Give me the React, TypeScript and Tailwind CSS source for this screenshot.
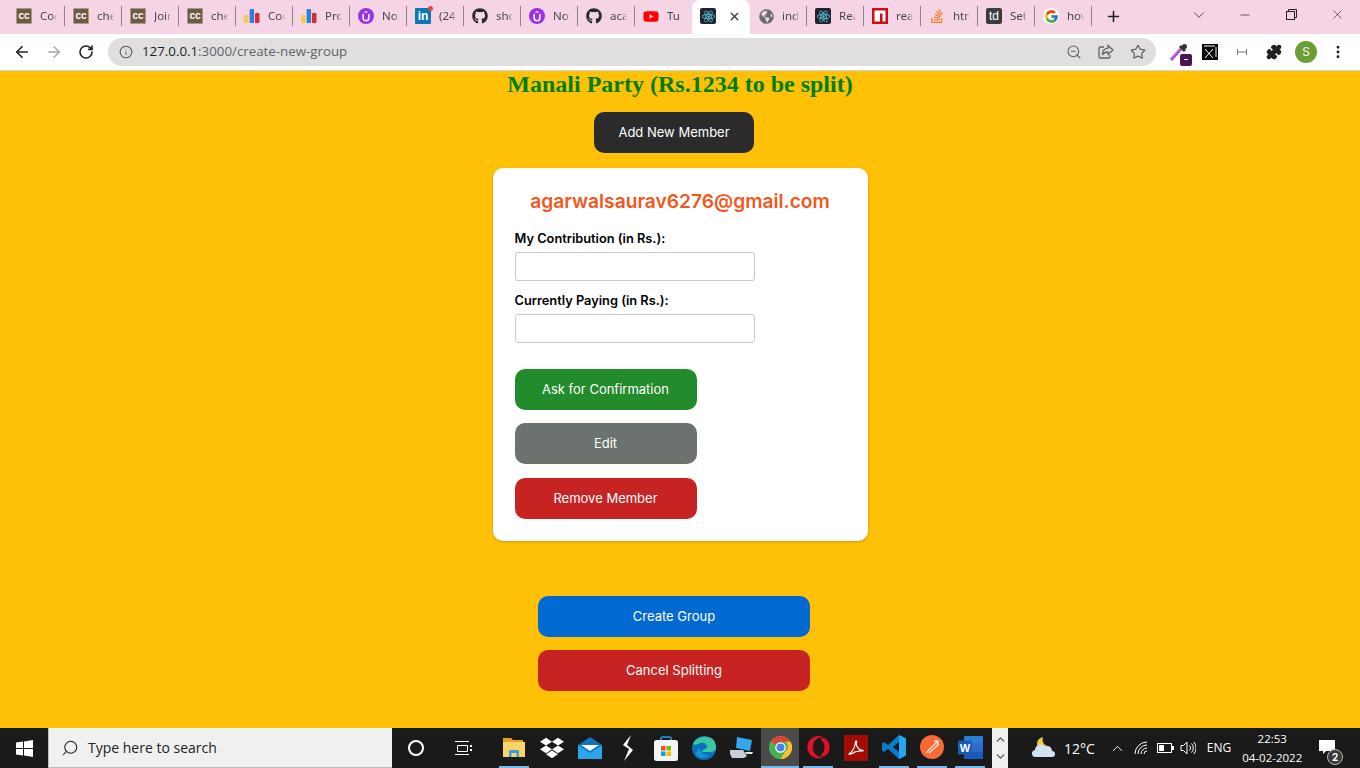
import React from "react";
import { ArrowLeft, ArrowRight, RotateCw, Info, X, Plus, ChevronDown, Minus, ZoomOut, Star, Puzzle, MoreVertical, Search, ChevronUp } from "lucide-react";
import { FaGithub, FaYoutube, FaDropbox, FaGlobeAmericas, FaStackOverflow, FaOpera } from "react-icons/fa";
import { FcGoogle } from "react-icons/fc";
import { SiReact } from "react-icons/si";

const CC = () => (
  <span className="flex h-4 w-4 items-center justify-center rounded-[1px] border border-[#a89a87] bg-[#6f5a43] font-['Liberation_Sans',sans-serif] text-[10px] font-bold leading-none text-white">cc</span>
);
const Bars = () => (
  <svg width="16" height="16" viewBox="0 0 16 16"><rect x="0" y="7" width="4.5" height="8" rx="1" fill="#f7c948" /><rect x="5.6" y="1" width="4.5" height="14" rx="1" fill="#2f7de1" /><rect x="11" y="5" width="4.5" height="10" rx="1" fill="#d32f2f" /></svg>
);
const Purple = () => (
  <svg width="16" height="16" viewBox="0 0 16 16"><circle cx="8" cy="8" r="8" fill="#9b30e8" /><path d="M5.2 6v4a2.8 2.8 0 0 0 5.6 0V6" fill="none" stroke="#fff" strokeWidth="1.6" /><path d="M8 3 5.5 4.6h5z" fill="#fff" /></svg>
);
const LinkedIn = () => (
  <span className="relative flex h-4 w-4 items-center justify-center rounded-[1px] bg-[#0a78b5] font-['Liberation_Sans',sans-serif] text-[12px] font-bold leading-none text-white">in<span className="absolute -right-[2px] -top-[2px] h-[5px] w-[5px] rounded-full bg-[#e04a3f]" /></span>
);
const Github = () => <FaGithub size={16} color="#24292e" />;
const Youtube = () => <FaYoutube size={17} color="#f00" />;
const ReactIcon = () => (
  <span className="flex h-4 w-4 items-center justify-center rounded-[2px] bg-[#20232a]"><SiReact size={13} color="#61dafb" /></span>
);
const Globe = () => <FaGlobeAmericas size={15} color="#6a6d70" />;
const Npm = () => (
  <svg width="16" height="16" viewBox="0 0 16 16"><rect width="16" height="16" fill="#cb0f17" /><path d="M2.5 2.5h11v11h-3V5.5H8v8H2.5z" fill="#fff" /></svg>
);
const SO = () => <FaStackOverflow size={16} color="#f48024" />;
const TD = () => (
  <span className="flex h-4 w-4 items-center justify-center rounded-[2px] bg-[#3b3b3b] font-['Liberation_Sans',sans-serif] text-[12px] leading-none text-white">td</span>
);
const Google = () => (
  <span className="flex h-4 w-4 items-center justify-center rounded-full bg-white"><FcGoogle size={15} /></span>
);

const tabs: [React.ReactNode, string][] = [
  [<CC />, "Cod"], [<CC />, "che"], [<CC />, "Join"], [<CC />, "che"], [<Bars />, "Cod"], [<Bars />, "Pro"],
  [<Purple />, "Not"], [<LinkedIn />, "(24"], [<Github />, "sho"], [<Purple />, "Not"], [<Github />, "aca"], [<Youtube />, "Tu"],
];
const tabsAfter: [React.ReactNode, string][] = [
  [<Globe />, "ind"], [<ReactIcon />, "Rea"], [<Npm />, "rea"], [<SO />, "htn"], [<TD />, "Set"], [<Google />, "hov"],
];

const Tab = ({ icon, title, last }: { icon: React.ReactNode; title: string; last: boolean }) => (
  <div className="flex h-[34px] w-[57px] items-center pb-[2px] pl-2">
    <span className="flex w-4 shrink-0 items-center justify-center">{icon}</span>
    <span className="ml-2 w-[18px] overflow-hidden whitespace-nowrap font-['Noto_Sans',sans-serif] text-[11.500px] text-[#45484c] [mask-image:linear-gradient(to_right,black_72%,transparent)]">{title}</span>
    <span className={"ml-[7px] h-5 w-px " + (last ? "bg-transparent" : "bg-[#8d8589]")} />
  </div>
);

const PageButton = ({ className, label }: { className: string; label: string }) => (
  <button className={"flex h-[41px] items-center justify-center rounded-[10px] text-[13px] font-normal text-white " + className}>{label}</button>
);

const Win = () => (
  <svg width="17" height="17" viewBox="0 0 17 17" fill="#fff"><path d="M0 2.6 7 1.6v6.4H0zM8 1.4 17 0v8H8zM0 9h7v6.4l-7-1zM8 9h9v8l-9-1.4z" /></svg>
);

const Files = () => (
  <svg width="22" height="20" viewBox="0 0 22 20"><path d="M0 1h8l2 2h10v4H0z" fill="#e0a526" /><rect y="5" width="22" height="15" fill="#f9d66b" /><path d="M6 20v-6a1 1 0 0 1 1-1h8a1 1 0 0 1 1 1v6h-2.5v-4h-5v4z" fill="#3f9cd8" /></svg>
);
const Mail = () => (
  <svg width="24" height="22" viewBox="0 0 24 22"><path d="M0 8 12 0l12 8v14H0z" fill="#0f74bd" /><path d="M0 8l12 8 12-8v14H0z" fill="#28a8ea" /><path d="M3 8h18l-9 6z" fill="#fff" /></svg>
);
const Bolt = () => (
  <svg width="14" height="26" viewBox="0 0 14 26"><path d="M10 0 2 10l6 4-5 12 9-11-6-5z" fill="#fff" /></svg>
);
const Store = () => (
  <svg width="24" height="25" viewBox="0 0 24 25"><path d="M7 5V2.5A1.5 1.5 0 0 1 8.5 1h7A1.5 1.5 0 0 1 17 2.5V5" fill="none" stroke="#19a0e0" strokeWidth="1.6" /><rect y="4" width="24" height="21" rx="2.5" fill="#f4f4f4" /><rect x="7" y="10" width="4.5" height="4.5" fill="#f25022" /><rect x="12.5" y="10" width="4.5" height="4.5" fill="#7fba00" /><rect x="7" y="15.5" width="4.5" height="4.5" fill="#00a4ef" /><rect x="12.5" y="15.5" width="4.5" height="4.5" fill="#ffb900" /></svg>
);
const Edge = () => (
  <svg width="24" height="24" viewBox="0 0 24 24"><circle cx="12" cy="12" r="12" fill="#0c70b8" /><path d="M1 8C4 1 13-1 19 2c4 2 5 6 5 10 0 3-3 4-6 4H10c0-3 4-2 5-5 0-3-3-5-6-4-4 1-7 3-8 1z" fill="#38c8a0" /><path d="M8 12c0 5 5 8 10 6-3 4-9 5-13 2-2-2-1-6 3-8z" fill="#1690d8" /></svg>
);
const Laptop = () => (
  <svg width="24" height="22" viewBox="0 0 24 22"><path d="M7 0l15 3-2 11-14-3z" fill="#35a5ec" /><path d="M0 13h13l4 6-3 2H2l-2-4z" fill="#c9cfd4" /><path d="M15 15h8l-1 2h-6z" fill="#e8e8e8" /></svg>
);
const Chrome = () => (
  <svg width="23" height="23" viewBox="0 0 24 24"><circle cx="12" cy="12" r="12" fill="#4caf50" /><path d="M12 0a12 12 0 0 1 10.4 6H12a6 6 0 0 0-5.5 3.5L2.2 5A12 12 0 0 1 12 0z" fill="#db4437" /><path d="M22.4 6A12 12 0 0 1 12 24l5-8a6 6 0 0 0 0-10z" fill="#fbc02d" /><circle cx="12" cy="12" r="5.5" fill="#fff" /><circle cx="12" cy="12" r="4.2" fill="#4a86e8" /></svg>
);
const Acrobat = () => (
  <span className="flex h-[26px] w-[24px] items-center justify-center bg-[#a30b05]">
    <svg width="16" height="16" viewBox="0 0 16 16" fill="none" stroke="#fff" strokeWidth="1.2"><path d="M1 14C4 12 7 7 7.5 2c.2-2 1.5-1 1 1C8 6 10 10 15 10.5c1.500.5-3 0-7 1.200C5 12.500 3 15 1 14z" /></svg>
  </span>
);
const VSCode = () => (
  <svg width="24" height="24" viewBox="0 0 24 24"><path d="M17 0l7 3.500v17L17 24 6 14l-4 3-2-1.500v-7L2 7l4 3z" fill="#0a7cc8" /><path d="M17 0l7 3.500v17L17 24z" fill="#22a7f0" /><path d="M17 7l-6 5 6 5z" fill="#1a1a1a" /></svg>
);
const Postman = () => (
  <svg width="24" height="24" viewBox="0 0 24 24"><circle cx="12" cy="12" r="12" fill="#f76935" /><path d="M6 18 17 7M9 18l10-9M14 6l4 0 0 4" stroke="#ffe0d0" strokeWidth="1.400" fill="none" /></svg>
);
const Word = () => (
  <svg width="25" height="23" viewBox="0 0 25 23"><rect x="6" y="0" width="19" height="23" rx="1" fill="#2b7cd3" /><rect x="6" y="15.500" width="19" height="7.500" fill="#185abd" /><rect x="6" y="7.500" width="19" height="8" fill="#2b6dc8" /><rect x="0" y="4.500" width="14" height="14" rx="1" fill="#1a5db5" /><text x="7" y="15.500" textAnchor="middle" fontFamily="Liberation Sans" fontWeight="700" fontSize="11" fill="#fff">W</text></svg>
);

const apps: { icon: React.ReactNode; open?: boolean; active?: boolean }[] = [
  { icon: <Files />, open: true },
  { icon: <FaDropbox size={24} color="#fff" /> },
  { icon: <Mail /> },
  { icon: <Bolt /> },
  { icon: <Store /> },
  { icon: <Edge /> },
  { icon: <Laptop /> },
  { icon: <Chrome />, open: true, active: true },
  { icon: <FaOpera size={23} color="#e3102a" />, open: true },
  { icon: <Acrobat /> },
  { icon: <VSCode />, open: true },
  { icon: <Postman />, open: true },
  { icon: <Word />, open: true },
];

const Weather = () => (
  <svg width="24" height="22" viewBox="0 0 24 22"><path d="M11 0a7 7 0 0 0 7 9.500A7.500 7.500 0 0 1 5 8a7 7 0 0 1 6-8z" fill="#f8c93e" /><path d="M4 20a3.500 3.500 0 0 1-1-7A5.500 5.500 0 0 1 13 10a4.500 4.500 0 0 1 7 4 3 3 0 0 1 0 6z" fill="#cfe3f5" /></svg>
);
const Wifi = () => (
  <svg width="14" height="14" viewBox="0 0 14 14" fill="none" stroke="#fff" strokeWidth="1"><path d="M1 13A12 12 0 0 1 13 1M4 13a9 9 0 0 1 9-9M7 13a6 6 0 0 1 6-6M10 13a3 3 0 0 1 3-3" /></svg>
);
const Battery = () => (
  <svg width="17" height="10" viewBox="0 0 17 10" fill="none"><rect x=".5" y=".5" width="14" height="9" stroke="#fff" /><rect x="2" y="2" width="5" height="6" fill="#fff" /><rect x="15" y="3" width="2" height="4" fill="#fff" /></svg>
);
const Volume = () => (
  <svg width="16" height="14" viewBox="0 0 16 14" fill="none" stroke="#fff" strokeWidth="1"><path d="M1 4.500h2.500L7 1v12L3.500 9.500H1zM9.500 4.500a3.500 3.500 0 0 1 0 5M11.500 2.500a6.500 6.500 0 0 1 0 9M13.800 1a9 9 0 0 1 0 12" /></svg>
);

export default function App() {
  return (
    <div className="flex h-[768px] w-[1360px] flex-col overflow-hidden font-['Inter',sans-serif]">
      {/* tab strip */}
      <div className="flex h-[34px] shrink-0 bg-[#f5d4e5] pl-2 font-['Open_Sans',sans-serif]">
        {tabs.map(([icon, title], i) => (
          <Tab key={i} icon={icon} title={title} last={i === tabs.length - 1} />
        ))}
        <div className="flex h-[34px] w-[58px] items-center gap-[12px] rounded-t-[8px] bg-white pb-[2px] pl-2">
          <ReactIcon />
          <X size={13} strokeWidth={2.5} color="#3c4043" />
        </div>
        {tabsAfter.map(([icon, title], i) => (
          <Tab key={i} icon={icon} title={title} last={false} />
        ))}
        <div className="flex w-[46px] items-center justify-center pb-[2px] pr-1">
          <Plus size={17} strokeWidth={2.2} color="#202124" />
        </div>
        <div className="ml-auto flex items-start">
          <div className="flex h-[29px] w-[46px] items-center justify-center"><ChevronDown size={18} strokeWidth={1} color="#222" /></div>
          <div className="flex h-[29px] w-[46px] items-center justify-center"><Minus size={14} strokeWidth={1.2} color="#222" /></div>
          <div className="flex h-[29px] w-[46px] items-center justify-center">
            <svg width="11" height="11" viewBox="0 0 11 11" fill="none" stroke="#222"><rect x=".5" y="2.500" width="8" height="8" /><path d="M2.500 2.500v-2h8v8h-2" /></svg>
          </div>
          <div className="flex h-[29px] w-[46px] items-center justify-center"><X size={15} strokeWidth={1} color="#222" /></div>
        </div>
      </div>

      {/* toolbar */}
      <div className="flex h-[37px] shrink-0 items-center border-b border-[#d9d6cf] bg-white pb-px">
        <div className="flex w-[108px] items-center">
          <ArrowLeft size={18} strokeWidth={2.2} color="#202124" className="ml-[13px]" />
          <ArrowRight size={18} strokeWidth={1.8} color="#a4a6a8" className="ml-[14px]" />
          <RotateCw size={16} strokeWidth={2.4} color="#202124" className="ml-[15px]" />
        </div>
        <div className="flex h-[28px] w-[1048px] items-center rounded-full bg-[#dfdfdf] pl-[11px] pr-[10px] font-['Open_Sans',sans-serif]">
          <Info size={14} strokeWidth={1.8} color="#55585b" />
          <span className="ml-[9px] text-[13.300px] leading-none text-[#202124]">127.0.0.1<span className="text-[#5f6368]">:3000/create-new-group</span></span>
          <div className="ml-auto flex items-center gap-[16px]">
            <ZoomOut size={16} strokeWidth={1.6} color="#5f6368" />
            <svg width="16" height="16" viewBox="0 0 16 16" fill="none" stroke="#5f6368" strokeWidth="1.300"><path d="M6 3H2.500A1.500 1.500 0 0 0 1 4.500v8A1.500 1.500 0 0 0 2.500 14h8a1.500 1.500 0 0 0 1.500-1.500V11" /><path d="M10 1.500 15 6l-5 4.500V8C7.500 8 5.500 9 4.500 11c0-4 2-6.500 5.500-6.800z" /></svg>
            <Star size={16} strokeWidth={1.8} color="#5f6368" />
          </div>
        </div>
        <div className="ml-[12px] flex flex-1 items-center">
          <span className="relative flex w-[22px] justify-center">
            <svg width="18" height="18" viewBox="0 0 18 18"><path d="M1 17 11 6" stroke="#b455d6" strokeWidth="3" /><path d="M10 3l5 5" stroke="#333" strokeWidth="3" /><circle cx="14.500" cy="3.500" r="2.500" fill="#333" /></svg>
            <span className="absolute -bottom-[5px] left-[12px] flex h-3 w-3 items-center justify-center rounded-[2px] bg-[#4a1257]"><span className="h-px w-1 bg-white" /></span>
          </span>
          <span className="ml-[12px] flex h-4 w-4 items-center justify-center bg-black">
            <svg width="14" height="14" viewBox="0 0 14 14" fill="none" stroke="#fff" strokeWidth="1"><path d="M2 4l8 9M10 4l-8 9M1 1h11M13 2v10" /></svg>
          </span>
          <span className="ml-[14px] flex w-5 justify-center">
            <svg width="10" height="8" viewBox="0 0 10 8" fill="none" stroke="#777" strokeWidth="1"><path d="M.5 1v6M9.500 1v6M1 4h8" /></svg>
          </span>
          <span className="ml-[14px] flex w-4 justify-center"><Puzzle size={16} fill="#202124" color="#202124" /></span>
          <span className="ml-[13px] flex h-[22px] w-[22px] items-center justify-center rounded-full bg-[#6b9e35] text-[12px] text-white">S</span>
          <MoreVertical size={16} strokeWidth={2.4} color="#202124" className="ml-[13px]" />
        </div>
      </div>

      {/* page */}
      <main className="flex flex-1 flex-col items-center bg-[#ffc107]">
        <h1 className="font-['Liberation_Serif',serif] text-[24px] font-bold leading-[27px] text-[#008000]">Manali Party (Rs.1234 to be split)</h1>
        <PageButton className="mr-[12px] mt-[14px] w-[160px] bg-[#2b2b2b]" label="Add New Member" />
        <section className="mt-[15px] h-[373px] w-[375px] rounded-[10px] bg-white px-[22px] pt-[21px] shadow-[0_1px_3px_rgba(0,0,0,0.2)]">
          <h2 className="text-center text-[19.200px] font-semibold leading-[24px] text-[#f4571c]">agarwalsaurav6276@gmail.com</h2>
          <label className="mt-[16px] block text-[12.800px] font-semibold leading-[20px] text-black">My Contribution (in Rs.):</label>
          <input className="mt-[3px] block h-[29px] w-[240px] rounded-[3px] border border-[#c8c8c8] bg-white" />
          <label className="mt-[10px] block text-[12.800px] font-semibold leading-[20px] text-black">Currently Paying (in Rs.):</label>
          <input className="mt-[3px] block h-[29px] w-[240px] rounded-[3px] border border-[#c8c8c8] bg-white" />
          <PageButton className="mt-[26px] w-[182px] bg-[#228b2b]" label="Ask for Confirmation" />
          <PageButton className="mt-[13px] w-[182px] bg-[#6c736e]" label="Edit" />
          <PageButton className="mt-[14px] w-[182px] bg-[#c82323]" label="Remove Member" />
        </section>
        <PageButton className="mr-[12px] mt-[55px] w-[272px] bg-[#0069d2]" label="Create Group" />
        <PageButton className="mr-[12px] mt-[13px] w-[272px] bg-[#c82323]" label="Cancel Splitting" />
      </main>

      {/* taskbar */}
      <div className="flex h-[40px] shrink-0 items-center bg-[#1a1a1a] text-white">
        <div className="flex w-[48px] justify-center"><Win /></div>
        <div className="flex h-[40px] w-[344px] items-center border-b border-l border-[#bdbdbd] bg-[#f0f0f0] pl-[12px] font-['Open_Sans',sans-serif] text-[#222]">
          <Search size={18} strokeWidth={1.4} color="#222" className="-scale-x-100" />
          <span className="ml-[9px] text-[14px]">Type here to search</span>
        </div>
        <div className="flex w-[48px] justify-center"><span className="h-[16px] w-[16px] rounded-full border-2 border-white" /></div>
        <div className="flex w-[46px] justify-center">
          <svg width="17" height="16" viewBox="0 0 17 16" fill="none" stroke="#fff"><path d="M0 1.500h14M2.500 5.500h10v6h-10zM0 14.500h14" /><rect x="15" y="5" width="2" height="2" fill="#fff" stroke="none" /><rect x="15" y="9" width="2" height="2" fill="#fff" stroke="none" /></svg>
        </div>
        <div className="ml-[9px] flex h-full">
          {apps.map((a, i) => (
            <div key={i} className={"flex h-full w-[38px] items-center justify-center " + (a.active ? "border-b-2 border-[#76b9ed] bg-[#4b4b4b]" : a.open ? "border-b-2 border-[#76b9ed] [border-image:linear-gradient(to_right,transparent_12%,#76b9ed_12%,#76b9ed_88%,transparent_88%)_1]" : "")}>
              {a.icon}
            </div>
          ))}
        </div>
        <div className="ml-[3px] flex h-full w-[16px] flex-col items-center justify-between bg-[#f0f0f0] py-[5px]">
          <ChevronUp size={13} strokeWidth={2.4} color="#555" />
          <ChevronDown size={13} strokeWidth={2.4} color="#555" />
        </div>
        <div className="ml-[22px] flex w-[28px] justify-center"><Weather /></div>
        <span className="ml-[6px] font-['Open_Sans',sans-serif] text-[14px]">12°C</span>
        <ChevronUp size={17} strokeWidth={1.300} color="#fff" className="ml-[14px]" />
        <span className="ml-[8px]"><Wifi /></span>
        <span className="ml-[9px]"><Battery /></span>
        <span className="ml-[6px]"><Volume /></span>
        <span className="ml-[11px] font-['Open_Sans',sans-serif] text-[12px]">ENG</span>
        <div className="ml-[12px] flex w-[58px] flex-col items-center font-['Open_Sans',sans-serif] text-[11.500px] leading-[19px]">
          <span>22:53</span>
          <span className="whitespace-nowrap">04-02-2022</span>
        </div>
        <div className="relative ml-[18px]">
          <svg width="18" height="16" viewBox="0 0 18 16"><path d="M0 0h16v11H7l-3 3v-3H0z" fill="#fff" /></svg>
          <span className="absolute -bottom-[9px] left-[8px] flex h-[16px] w-[16px] items-center justify-center rounded-full border border-[#bbb] bg-[#3a3a3a] text-[10px] font-bold leading-none text-white">2</span>
        </div>
      </div>
    </div>
  );
}
